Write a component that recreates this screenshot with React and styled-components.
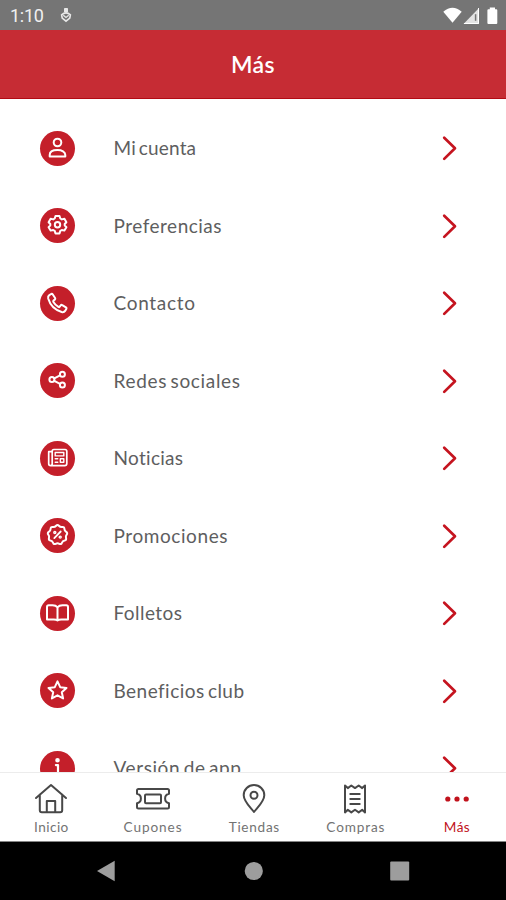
import React from "react";
import styled, { createGlobalStyle } from "styled-components";

const GlobalStyle = createGlobalStyle`
  * { box-sizing: border-box; }
  body { margin: 0; background: #fff; }
`;

const Screen = styled.div`
  width: 506px;
  height: 900px;
  display: flex;
  flex-direction: column;
  overflow: hidden;
  background: #fff;
  font-family: Lato, sans-serif;
  font-variant-ligatures: none;
`;

const StatusBar = styled.div`
  height: 30px;
  flex: none;
  display: flex;
  align-items: center;
  padding: 2px 7px 0 10px;
  background: #757575;
  color: #f0f0f0;
`;

const Clock = styled.span`
  width: 47px;
  font: 400 18px/28px Roboto, sans-serif;
  letter-spacing: -0.25px;
`;

const StatusIcons = styled.div`
  margin-left: auto;
  display: flex;
`;

const Header = styled.header`
  height: 69px;
  flex: none;
  display: flex;
  align-items: center;
  justify-content: center;
  background: #c62c34;
  border-bottom: 1.5px solid #b20b14;
`;

const Title = styled.h1`
  margin: 0 0 1px;
  color: #fff;
  font-size: 23px;
  font-weight: 600;
  line-height: 30px;
  letter-spacing: 0.4px;
`;

const List = styled.ul`
  flex: 1;
  min-height: 0;
  margin: 0;
  padding: 10.3px 0 0;
  list-style: none;
  overflow: hidden;
`;

const Row = styled.li`
  height: 77.5px;
  display: flex;
  align-items: center;
  padding: 0 47px 0 39.5px;
`;

const Badge = styled.span`
  width: 35px;
  height: 35px;
  flex: none;
  border-radius: 50%;
  background: #c41f2a;
  display: flex;
`;

const Label = styled.span`
  flex: 1;
  margin-left: 39px;
  color: #5e5e60;
  font-size: 19px;
  line-height: 28px;
  white-space: nowrap;
  word-spacing: -2px;
  letter-spacing: ${(p) => p.$spacing}px;
`;

const TabBar = styled.nav`
  height: 70px;
  flex: none;
  display: grid;
  grid-template-columns: repeat(5, 101.4px);
  padding-left: 0.5px;
  border-top: 1px solid #ececec;
  border-bottom: 1px solid #858585;
`;

const Tab = styled.div`
  display: flex;
  flex-direction: column;
  align-items: center;
  padding-top: 9px;
  color: ${(p) => (p.$active ? "#c1121c" : "#484848")};
`;

const TabLabel = styled.span`
  font-size: 13.6px;
  line-height: 18px;
  color: ${(p) => (p.$active ? "#c1121c" : "#737373")};
  letter-spacing: ${(p) => p.$spacing}px;
  margin: 0 ${(p) => -p.$spacing}px 0 0;
`;

const SystemBar = styled.div`
  height: 58px;
  flex: none;
  display: flex;
  align-items: center;
  justify-content: space-between;
  padding: 0 96.5px 0 96px;
  background: #000;
`;

const Glyph = ({ children }) => (
  <svg width="35" height="35" viewBox="-17.5 -17.5 35 35" fill="none" stroke="#fff" strokeWidth="2" strokeLinecap="round" strokeLinejoin="round">
    {children}
  </svg>
);

const toothed = (count, outer, inner) => {
  const n = count * 2;
  const pts = Array.from({ length: n }, (_, i) => {
    const r = i % 2 ? inner : outer;
    const a = (i * 2 * Math.PI) / n - Math.PI / 2;
    return [r * Math.cos(a), r * Math.sin(a)];
  });
  const mid = (a, b) => `${((a[0] + b[0]) / 2).toFixed(2)} ${((a[1] + b[1]) / 2).toFixed(2)}`;
  return (
    pts.reduce(
      (d, p, i) => `${d} Q${p[0].toFixed(2)} ${p[1].toFixed(2)} ${mid(p, pts[(i + 1) % n])}`,
      `M${mid(pts[n - 1], pts[0])}`
    ) + "Z"
  );
};

const items = [
  { label: "Mi cuenta", spacing: 0.15, icon: <><circle cx="0" cy="-6" r="3.8" /><path d="M-7.8 7.9V6.4C-7.8 3.2-4.4 1.6 0 1.6S7.8 3.2 7.8 6.4V7.9Z" /></> },
  { label: "Preferencias", spacing: 0.5, icon: <g transform="translate(0 -.8)"><path d="M-2-8.7H2L2.8-6.2 4.3-5.3 6.9-5.9 8.9-2.5 7.2-.7V.7L8.9 2.5 6.9 5.9 4.3 5.3 2.8 6.2 2 8.7H-2L-2.8 6.2-4.3 5.3-6.9 5.9-8.9 2.5-7.2.7V-.7L-8.9-2.5-6.9-5.9-4.3-5.3-2.8-6.2Z" /><circle r="2.7" /></g> },
  { label: "Contacto", spacing: 0.7, icon: <path d="M-8.2-8.3-6.3-9.5C-5.7-9.8-5.1-9.6-4.7-9L-2.4-5.5C-2-4.9-2.2-4.3-2.7-3.9L-4-2.9C-4.4-2.6-4.4-2.1-4.1-1.6-2.9.4-1.3 2 .9 3.4 1.4 3.7 1.9 3.6 2.2 3.2L3.2 1.9C3.6 1.3 4.2 1.2 4.8 1.6L8.4 3.8C9 4.2 9.2 4.8 8.8 5.4L7.6 7.4C6.9 8.5 5.5 8.8 4.2 8.5-2.6 6.4-7.4 1.6-9.3-5-9.6-6.3-9.3-7.6-8.2-8.3Z" /> },
  { label: "Redes sociales", spacing: 0.66, icon: <><circle cx="-5.6" cy="-.9" r="2.5" /><circle cx="4.9" cy="-6.3" r="2.5" /><circle cx="4.9" cy="4.5" r="2.5" /><path d="M-3.2-2.1 2.5-5.1M-3.2.3 2.5 3.3" /></> },
  { label: "Noticias", spacing: 0.3, icon: <g strokeWidth="1.7"><path d="M-5.3-6.8H-8.8V5.3Q-8.8 7.2-6.8 7.2H7.2Q9.3 7.2 9.3 5V-7.2Q9.3-9 7.5-9H-3.6Q-5.3-9-5.3-7.2V5.2Q-5.3 7.2-7 7.2" /><path d="M-2.3-6H6.3V-2.6H-2.3ZM-2.3.3H.3M-2.3 3.8H.3M2.8.3H6.3V3.8H2.8Z" strokeWidth="1.4" /></g> },
  { label: "Promociones", spacing: 0.58, icon: <g transform="translate(0 -.7)"><path d={toothed(9, 10.6, 8)} /><path d="M3.2-3.3-3.2 3.3" strokeWidth="1.8" /><circle cx="-2.7" cy="-2.3" r="1" strokeWidth="1.4" /><circle cx="2.7" cy="2.3" r="1" strokeWidth="1.4" /></g> },
  { label: "Folletos", spacing: 0.45, icon: <path d="M0-6.2C-1.2-7.7-3-8.2-5-8.2H-8.8Q-10.5-8.2-10.5-6.4V6.1H-3.8C-2 6.1-.7 6.5 0 7 .7 6.5 2 6.1 3.8 6.1H10.5V-6.4Q10.5-8.2 8.8-8.2H5C3-8.2 1.2-7.7 0-6.2ZV7" /> },
  { label: "Beneficios club", spacing: 0.45, icon: <path d="M0-9.2 2.7-3.3 9-2.6 4.3 1.7 5.6 7.9 0 4.8-5.6 7.9-4.3 1.7-9-2.6-2.7-3.3Z" /> },
  { label: "Versión de app", spacing: 0.6, icon: <><circle cx="0" cy="-8.3" r="1.3" fill="#fff" /><path d="M-1.6-3.4H.5V7.5M-2 7.5H3" strokeWidth="2.2" /></> },
];

const tabs = [
  { label: "Inicio", spacing: 0.45, icon: <><path d="M2 16 17 3 32 16M5.8 12.5V28.3Q5.8 30.3 7.8 30.3H26.2Q28.2 30.3 28.2 28.3V12.5" /><path d="M12.8 30V19H21.2V30" /></> },
  { label: "Cupones", spacing: 0.9, icon: <><path d="M2.5 7H31.5Q33 7 33 8.5V11.7C27.8 12.7 27.8 20.2 33 21.2V24.9Q33 26.4 31.5 26.4H2.5Q1 26.4 1 24.9V21.2C6.2 20.2 6.2 12.7 1 11.7V8.5Q1 7 2.5 7Z" /><rect x="9" y="12.4" width="16" height="8.8" rx="1" /></> },
  { label: "Tiendas", spacing: 0.72, icon: <><path d="M17 30C14 26 6.7 19.5 6.7 13.2A10.3 10.2 0 0 1 27.3 13.2C27.3 19.5 20 26 17 30Z" /><circle cx="17" cy="13.3" r="3.5" /></> },
  { label: "Compras", spacing: 0.85, icon: <><path d="M7 3.5 9.8 6.1 13.3 3.5 17 6.1 20.7 3.5 24.2 6.1 27 3.5V30.4L24.2 27.8 20.7 30.4 17 27.8 13.3 30.4 9.8 27.8 7 30.4Z" /><path d="M12.3 12H21.7M12.3 17H21.7M12.3 22H21.7" /></> },
  { label: "Más", spacing: 0.4, active: true, icon: <g fill="currentColor" stroke="none"><circle cx="7.8" cy="17" r="2.6" /><circle cx="17" cy="17" r="2.6" /><circle cx="26.2" cy="17" r="2.6" /></g> },
];

const Chevron = () => (
  <svg width="18" height="26" viewBox="0 0 18 26" fill="none" stroke="#c5141f" strokeWidth="2.7" strokeLinecap="round" strokeLinejoin="round">
    <path d="M3.2 2.8 14 13.2 3.2 23.9" />
  </svg>
);

export default function App() {
  return (
    <Screen>
      <GlobalStyle />
      <StatusBar>
        <Clock>1:10</Clock>
        <svg width="18" height="28" viewBox="0 0 18 28" fill="none" stroke="#e8e8e8">
          <path d="M7.5 6.5H10.5V10H7.5Z" fill="#e8e8e8" />
          <path d="M4.6 12.8Q9 8.8 13.4 12.8L12.8 16 9 19.2 5.2 16Z" strokeWidth="1.6" />
          <path d="M6.3 13.3 9 15.4 11.7 13.3" strokeWidth="1.3" />
        </svg>
        <StatusIcons>
          <svg width="56" height="28" viewBox="443 1 56 28" fill="#fff">
            <path d="M443.3 10.7Q452.5 2.7 461.7 10.7L452.5 21.7Z" />
            <path d="M479 7V23H463.5Z" opacity=".8" />
            <path d="M475.6 13.2V19.8" stroke="#757575" strokeWidth="1.5" />
            <path d="M478.5 7V22.5H464" fill="none" stroke="#fff" />
            <path d="M489.8 6.5H495V8.3H496.3Q497.3 8.3 497.3 9.3V22Q497.3 23 496.3 23H488.4Q487.4 23 487.4 22V9.3Q487.4 8.3 488.4 8.3H489.8Z" />
          </svg>
        </StatusIcons>
      </StatusBar>
      <Header>
        <Title>Más</Title>
      </Header>
      <List>
        {items.map((item) => (
          <Row key={item.label}>
            <Badge><Glyph>{item.icon}</Glyph></Badge>
            <Label $spacing={item.spacing}>{item.label}</Label>
            <Chevron />
          </Row>
        ))}
      </List>
      <TabBar>
        {tabs.map((tab) => (
          <Tab key={tab.label} $active={tab.active}>
            <svg width="34" height="36" viewBox="0 0 34 36" fill="none" stroke="currentColor" strokeWidth="2" strokeLinejoin="round" strokeLinecap="round">
              {tab.icon}
            </svg>
            <TabLabel $active={tab.active} $spacing={tab.spacing}>{tab.label}</TabLabel>
          </Tab>
        ))}
      </TabBar>
      <SystemBar>
        <svg width="20" height="22" viewBox="0 0 20 22"><path d="M18.7.8V21.2L1 11Z" fill="#9d9d9d" /></svg>
        <svg width="20" height="20" viewBox="0 0 20 20"><circle cx="10.8" cy="10" r="9.1" fill="#9d9d9d" /></svg>
        <svg width="20" height="20" viewBox="0 0 20 20"><rect x=".2" y=".5" width="19" height="19" rx="1" fill="#9d9d9d" /></svg>
      </SystemBar>
    </Screen>
  );
}
